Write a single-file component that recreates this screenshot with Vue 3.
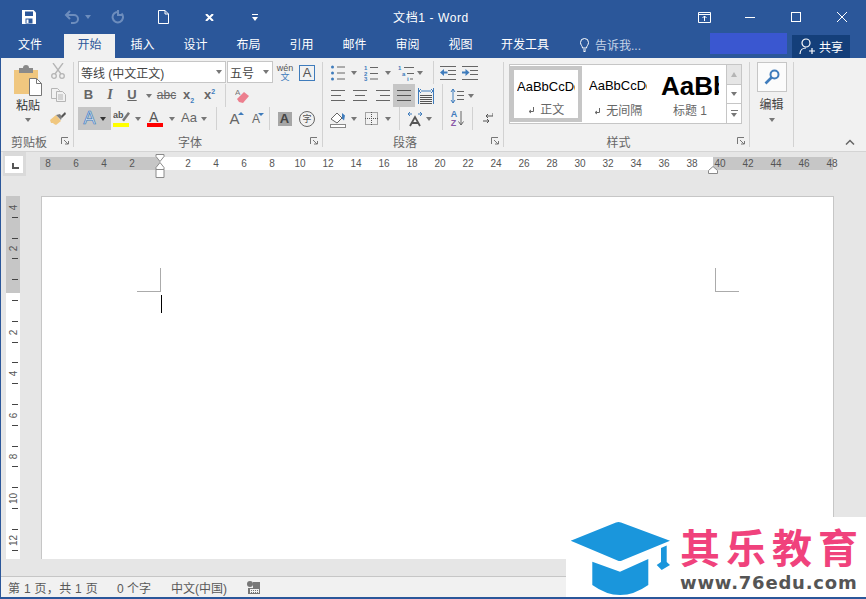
<template>
	<div class="window">
		<header class="titlebar">
			<div class="qat">
				<svg width="14" height="14" viewBox="0 0 14 14"><path d="M0 0h11.500l2.500 2.500v11.500h-14z" fill="#fff"/><path d="M3 1.500h8v4.500h-8zM3.500 8.500h7v5h-7z" fill="#2b579a"/><rect x="4.500" y="9.500" width="2" height="3.500" fill="#fff"/></svg>
				<svg width="15" height="14" viewBox="0 0 15 14" fill="none" stroke="#6d8dbd" stroke-width="2"><path d="M2 5h8a4 4 0 0 1 0 8h-3"/><path d="M6 1l-4 4 4 4"/></svg>
				<span class="caret caret--title"></span>
				<svg width="13" height="14" viewBox="0 0 13 14" fill="none" stroke="#6d8dbd" stroke-width="2"><path d="M10.500 3.500a5.200 5.200 0 1 1-3-1.500"/><path d="M7 0v5h4"/></svg>
				<svg width="11" height="14" viewBox="0 0 11 14" fill="#2b579a" stroke="#fff"><path d="M.5.5h6.500l3.500 3.500v9.500h-10zM7 .5v3.500h3.500"/></svg>
				<svg width="9" height="7" viewBox="0 0 9 7" fill="none" stroke="#fff" stroke-width="2"><path d="M1 0l7 7M8 0l-7 7"/></svg>
				<svg width="6" height="7" viewBox="0 0 6 7" fill="#fff"><rect width="6" height="1"/><path d="M0 3h6l-3 4z"/></svg>
			</div>
			<div class="doc-title">文档1 - Word</div>
			<div class="win-controls">
				<span class="win-btn"><svg width="13" height="11" viewBox="0 0 13 11" fill="none" stroke="#fff"><path d="M.5.500h12v10h-12zM.5 2.500h12M6.500 9v-5M4.500 6l2-2 2 2"/></svg></span>
				<span class="win-btn"><svg width="10" height="1" viewBox="0 0 10 1"><rect width="10" height="1" fill="#fff"/></svg></span>
				<span class="win-btn"><svg width="10" height="10" viewBox="0 0 10 10" fill="none" stroke="#fff"><rect x=".5" y=".5" width="9" height="9"/></svg></span>
				<span class="win-btn"><svg width="10" height="10" viewBox="0 0 10 10" stroke="#fff"><path d="M0 0l10 10M10 0l-10 10"/></svg></span>
			</div>
		</header>

		<nav class="tabs">
			<span class="tab tab--file">文件</span>
			<span
				v-for="tab in tabs"
				:key="tab"
				:class="['tab', { 'tab--active': tab == '开始', 'tab--wide': tab == '开发工具' }]"
			>{{ tab }}</span>
			<span class="tell">
				<svg width="9" height="14" viewBox="0 0 9 14" fill="none" stroke="#fff"><path d="M2.500 10c0-2-2-3-2-5.500a4 4 0 0 1 8 0c0 2.500-2 3.500-2 5.500zM3 12h3M3.500 13.500h2"/></svg>
				告诉我...
			</span>
			<span class="account"></span>
			<span class="share">
				<svg width="17" height="16" viewBox="0 0 17 16" fill="none" stroke="#fff" stroke-width="1.200"><circle cx="7" cy="5" r="4"/><path d="M1 16c0-4 3-6 6-6M10 13h6M13 10v6"/></svg>
				共享
			</span>
		</nav>

		<section class="ribbon">
			<div class="group group--clipboard">
				<div class="group-body clipboard">
					<div class="paste">
						<svg width="28" height="31" viewBox="0 0 28 31">
							<rect y="5" width="24" height="24" fill="#f0c77f"/>
							<path d="M5 3h4a3 3 0 0 1 6 0h4v5h-14z" fill="#8a8a8a"/>
							<path d="M15.500 13.500h7l5 5v12h-12z" fill="#fff" stroke="#777"/>
							<path d="M22.500 13.500v5h5" fill="none" stroke="#777"/>
						</svg>
						<span class="paste-label">粘贴</span>
						<span class="caret"></span>
					</div>
					<div class="clip-tools">
						<svg width="14" height="16" viewBox="0 0 14 16" fill="none" stroke="#b5b5b5" stroke-width="1.300"><path d="M2 0l8 11M12 0l-8 11"/><circle cx="3" cy="13" r="2.300"/><circle cx="11" cy="13" r="2.300"/></svg>
						<svg width="15" height="14" viewBox="0 0 15 14" fill="#f1f1f1" stroke="#b5b5b5"><path d="M.5.5h6l2 2v8h-8z"/><path d="M5.500 3.500h6l3 3v7h-9zM7 7h5M7 9h5M7 11h5"/></svg>
						<svg width="16" height="14" viewBox="0 0 16 14"><path d="M0 9l6-5 5 6-5 4-2-1-1-1-2 0z" fill="#f0c77f"/><path d="M6 4l4-1 2 3-1 3z" fill="#7d7d7d"/><path d="M11 5l4-4 1 2-4 4z" fill="#555"/></svg>
					</div>
				</div>
				<div class="group-label"><span>剪贴板</span><i class="launcher"><svg width="8" height="8" viewBox="0 0 8 8" fill="none" stroke="#777"><path d="M.5 7V.5h6.500M3 3l4 4M4 7h3.500v-3"/></svg></i></div>
			</div>
			<span class="group-sep"></span>

			<div class="group group--font">
				<div class="group-body">
					<div class="row font-row-1">
						<span class="combo combo--font">等线 (中文正文)<span class="caret"></span></span>
						<span class="combo combo--size">五号<span class="caret"></span></span>
						<span class="wen"><b>wén</b><b class="wen-zh">文</b></span>
						<span class="boxed-a">A</span>
					</div>
					<div class="row font-row-2">
						<b class="glyph">B</b>
						<i class="glyph glyph--serif">I</i>
						<b class="glyph glyph--u">U</b>
						<span class="caret"></span>
						<span class="glyph glyph--strike">abc</span>
						<b class="glyph">x<sub>2</sub></b>
						<b class="glyph">x<sup>2</sup></b>
						<span class="row-sep"></span>
						<svg width="15" height="16" viewBox="0 0 15 16"><path d="M2 11l7-7 5 4-6 7-4-1z" fill="#ec7f8e"/><text x="0" y="7" font-size="8" font-family="Liberation Sans" fill="#777">A</text></svg>
					</div>
					<div class="row font-row-3">
						<span class="text-effect"><span class="outline-a">A</span><span class="caret caret--dark"></span></span>
						<span class="marker">
							<svg width="17" height="18" viewBox="0 0 17 18"><text x="0" y="8" font-size="9" font-family="Liberation Sans" font-weight="bold" fill="#555">ab</text><path d="M9 10l6-8 2 1.500-6 8z" fill="#777"/><rect y="13" width="16" height="4" fill="#ff0"/></svg>
						</span>
						<span class="caret"></span>
						<span class="marker">
							<svg width="16" height="18" viewBox="0 0 16 18"><text x="2" y="12" font-size="14" font-family="Liberation Sans" fill="#555">A</text><rect y="13" width="16" height="4" fill="#f00"/></svg>
						</span>
						<span class="caret"></span>
						<span class="glyph glyph--aa">Aa</span>
						<span class="caret"></span>
						<span class="row-sep"></span>
						<span class="grow-a"><span>A</span><i class="tri tri--up"></i></span>
						<span class="grow-a grow-a--small"><span>A</span><i class="tri tri--down"></i></span>
						<span class="row-sep"></span>
						<span class="shade-a">A</span>
						<span class="circle-zi">字</span>
					</div>
				</div>
				<div class="group-label"><span>字体</span><i class="launcher"><svg width="8" height="8" viewBox="0 0 8 8" fill="none" stroke="#777"><path d="M.5 7V.5h6.500M3 3l4 4M4 7h3.500v-3"/></svg></i></div>
			</div>
			<span class="group-sep"></span>

			<div class="group group--para">
				<div class="group-body">
					<div class="row para-row-1">
						<svg width="14" height="16" viewBox="0 0 14 16"><g fill="#3f7cbc"><circle cx="1.500" cy="2" r="1.500"/><circle cx="1.500" cy="8" r="1.500"/><circle cx="1.500" cy="14" r="1.500"/></g><path d="M6 2h8M6 8h8M6 14h8" stroke="#666"/></svg>
						<span class="caret"></span>
						<svg width="14" height="16" viewBox="0 0 14 16"><g font-size="6" font-weight="bold" font-family="Liberation Sans" fill="#3f7cbc"><text y="5">1</text><text y="11">2</text><text y="16">3</text></g><path d="M6 2.500h8M6 8.500h8M6 14h8" stroke="#666"/></svg>
						<span class="caret"></span>
						<svg width="16" height="16" viewBox="0 0 16 16"><g font-size="6" font-weight="bold" font-family="Liberation Sans" fill="#3f7cbc"><text y="5">1</text><text x="4" y="11">a</text><text x="9" y="16">i</text></g><path d="M6 2.500h10M9 8.500h7M12 14h3" stroke="#666"/></svg>
						<span class="caret"></span>
						<span class="row-sep"></span>
						<svg width="16" height="14" viewBox="0 0 16 14"><path d="M0 .5h16M8 4.500h8M8 8.500h8M0 13.500h16" stroke="#666"/><path d="M0 6.500l4-3.500v2.500h3.500v2h-3.500v2.500z" fill="#3f7cbc"/></svg>
						<svg width="16" height="14" viewBox="0 0 16 14"><path d="M0 .5h16M8 4.500h8M8 8.500h8M0 13.500h16" stroke="#666"/><path d="M7.500 6.500l-4-3.500v2.500h-3.500v2h3.500v2.500z" fill="#3f7cbc"/></svg>
					</div>
					<div class="row para-row-2">
						<svg width="14" height="11" viewBox="0 0 14 11" stroke="#666"><path d="M0 .5h14M0 5.500h10M0 10.500h14"/></svg>
						<svg width="14" height="11" viewBox="0 0 14 11" stroke="#666"><path d="M0 .5h14M2 5.500h10M0 10.500h14"/></svg>
						<svg width="14" height="11" viewBox="0 0 14 11" stroke="#666"><path d="M0 .5h14M4 5.500h10M0 10.500h14"/></svg>
						<span class="justify-on"><svg width="14" height="11" viewBox="0 0 14 11" stroke="#555"><path d="M0 .5h14M0 5.500h14M0 10.500h14"/></svg></span>
						<svg width="16" height="16" viewBox="0 0 16 16"><path d="M.5 0v16M15.500 0v16" stroke="#3f7cbc"/><path d="M3 3h10M3 1l-2 2 2 2M13 1l2 2-2 2" fill="none" stroke="#3f7cbc"/><path d="M2 7.500h12M2 9.500h12M2 11.500h12M2 13.500h12M2 15.500h12" stroke="#555"/></svg>
						<span class="row-sep"></span>
						<svg width="14" height="16" viewBox="0 0 14 16"><path d="M3 1v14M1 4l2-3 2 3M1 12l2 3 2-3" fill="none" stroke="#3f7cbc"/><path d="M7 3.500h7M7 7.500h7M7 11.500h7" stroke="#666"/></svg>
						<span class="caret"></span>
					</div>
					<div class="row para-row-3">
						<svg width="17" height="18" viewBox="0 0 17 18"><path d="M1 9l6-6 5 5-5 5z" fill="#fff" stroke="#666"/><path d="M12 3l3 2.500-1 5-2-2z" fill="#3f7cbc"/><rect x=".5" y="14.500" width="15" height="3" fill="#fff" stroke="#888"/></svg>
						<span class="caret"></span>
						<svg width="13" height="13" viewBox="0 0 13 13" fill="none" stroke="#555" stroke-dasharray="1 1"><rect x=".5" y=".5" width="12" height="12"/><path d="M6.500 0v13M0 6.500h13"/></svg>
						<span class="caret"></span>
						<span class="row-sep"></span>
						<svg width="16" height="16" viewBox="0 0 16 16"><path d="M3 15l5-9 5 9M5 12h6" fill="none" stroke="#555" stroke-width="1.800"/><path d="M5 3h-4M3 1l-2 2 2 2M11 3h4M13 1l2 2-2 2" fill="none" stroke="#3f7cbc"/></svg>
						<span class="caret"></span>
						<span class="row-sep"></span>
						<span class="sort"><span class="sort-az"><b>A</b><b>Z</b></span><svg width="6" height="15" viewBox="0 0 6 15" fill="none" stroke="#666"><path d="M3 0v14M.5 10.500l2.500 3.500 2.500-3.500"/></svg></span>
						<span class="row-sep"></span>
						<svg width="10" height="13" viewBox="0 0 10 13" fill="none" stroke="#555"><path d="M10 1v3h-7M5 2l-2 2 2 2M0 9h6M4 7l2 2-2 2"/></svg>
					</div>
				</div>
				<div class="group-label"><span>段落</span><i class="launcher"><svg width="8" height="8" viewBox="0 0 8 8" fill="none" stroke="#777"><path d="M.5 7V.5h6.500M3 3l4 4M4 7h3.500v-3"/></svg></i></div>
			</div>
			<span class="group-sep"></span>

			<div class="group group--styles">
				<div class="group-body gallery-wrap">
					<div class="gallery">
						<div
							v-for="item in styleItems"
							:key="item.name"
							:class="['style-item', item.cls]"
						>
							<span class="style-preview">{{ item.preview }}</span>
							<span class="style-name">
								<svg v-if="item.mark" class="para-mark" width="6" height="7" viewBox="0 0 6 7" fill="none" stroke="#666"><path d="M5.500 0v4.500h-4M3 3l-2 1.500 2 1.500"/></svg>
								{{ item.name }}
							</span>
						</div>
					</div>
					<div class="gallery-scroll">
						<span class="scroll-btn scroll-btn--off"><i class="caret caret--up"></i></span>
						<span class="scroll-btn"><i class="caret"></i></span>
						<span class="scroll-btn scroll-btn--more"><i class="more-line"></i><i class="caret"></i></span>
					</div>
				</div>
				<div class="group-label"><span>样式</span><i class="launcher"><svg width="8" height="8" viewBox="0 0 8 8" fill="none" stroke="#777"><path d="M.5 7V.5h6.500M3 3l4 4M4 7h3.500v-3"/></svg></i></div>
			</div>
			<span class="group-sep"></span>

			<div class="group group--edit">
				<span class="edit-btn">
					<svg width="16" height="16" viewBox="0 0 16 16" fill="none" stroke="#3f7cbc"><circle cx="10.500" cy="5.500" r="4" stroke-width="2"/><path d="M7.500 8.500l-6 6" stroke-width="2.600"/></svg>
				</span>
				<span class="edit-label">编辑</span>
				<span class="caret"></span>
			</div>
			<span class="group-sep"></span>

			<span class="collapse">
				<svg width="10" height="6" viewBox="0 0 10 6" fill="none" stroke="#666" stroke-width="1.500"><path d="M1 5.500l4-4 4 4"/></svg>
			</span>
		</section>

		<div class="ruler-row">
			<span class="tab-stop"><span class="tab-stop-inner"><i class="tab-mark"></i></span></span>
			<div class="h-ruler">
				<span class="h-ruler-off h-ruler-off--left"></span>
				<span class="h-ruler-on"></span>
				<span class="h-ruler-off"></span>
				<div class="h-ruler-nums">
					<span v-for="(num, i) in hRuler" :key="i">{{ num }}</span>
				</div>
				<svg class="indent-left" width="10" height="25" viewBox="0 0 10 25" fill="#fff" stroke="#8a8a8a"><path d="M1 .5h8v2l-4 5-4-5zM1 15.500v-2l4-5 4 5v2zM1 15.500h8v8h-8z"/></svg>
				<svg class="indent-right" width="10" height="8" viewBox="0 0 10 8" fill="#fff" stroke="#8a8a8a"><path d="M.5 7.500v-3l4.500-4 4.500 4v3z"/></svg>
			</div>
		</div>

		<main class="workspace">
			<div class="v-ruler">
				<span class="v-ruler-off"></span>
				<div class="v-ruler-cells">
					<div v-for="(cell, i) in vRuler" :key="i" class="v-cell">
						<span class="v-num">{{ cell }}</span>
					</div>
				</div>
			</div>
			<div class="page">
				<div class="crop-row">
					<span class="crop crop--left"></span>
					<span class="crop crop--right"></span>
				</div>
				<span class="text-cursor"></span>
			</div>
		</main>

		<footer class="statusbar">
			<span class="status-page">第 1 页，共 1 页</span>
			<span class="status-words">0 个字</span>
			<span class="status-lang">中文(中国)</span>
			<svg width="13" height="13" viewBox="0 0 13 13"><circle cx="3" cy="3" r="3" fill="#777"/><path d="M6 1h7v12h-12v-6h5z" fill="#777"/><path d="M3 8h9v4h-9z" fill="#f1f1f1"/><path d="M4 9h1v1h-1zM6 9h1v1h-1zM8 9h1v1h-1zM10 9h1v1h-1zM4 11h1v1h-1zM6 11h1v1h-1zM8 11h1v1h-1zM10 11h1v1h-1z" fill="#777"/></svg>
		</footer>

		<div class="watermark">
			<svg class="wm-cap" width="110" height="82" viewBox="0 0 110 82">
				<path d="M4.700 23.700L50 5.500q2.500-1 5 0L104 23.700 56 43.500q-2 1-4.500 0z" fill="#1a96dc"/>
				<path d="M26.300 44.700L54 54.700 82.300 42V68Q54 88 26.300 68z" fill="#1a96dc"/>
				<path d="M95 31l5.700-2.500V45l3.300 3-8.300 5-5-5L95 45z" fill="#1a96dc"/>
			</svg>
			<div class="wm-text">
				<div class="wm-name">其乐教育</div>
				<div class="wm-url">www.76edu.com</div>
			</div>
		</div>
	</div>
</template>
<script setup>
    const tabs = ['开始', '插入', '设计', '布局', '引用', '邮件', '审阅', '视图', '开发工具'];

    const styleItems = [
        { name: '正文', preview: 'AaBbCcDd', cls: 'style-item--active', mark: true },
        { name: '无间隔', preview: 'AaBbCcDd', cls: '', mark: true },
        { name: '标题 1', preview: 'AaBb', cls: 'style-item--heading', mark: false },
    ];

    const hRuler = [8, 6, 4, 2, '', 2, 4, 6, 8, 10, 12, 14, 16, 18, 20, 22, 24, 26, 28, 30, 32, 34, 36, 38, 40, 42, 44, 46, 48];

    // 每格一个刻度，数字隔一格显示
    const vRuler = ['4', '', '2', '', '', '', '2', '', '4', '', '6', '', '8', '', '10', '', '12'];
</script>
<style scoped>
    .window{
        width: 866px;
        height: 599px;
        position: relative;
        overflow: hidden;
        display: flex;
        flex-direction: column;
        box-sizing: border-box;
        border-left: 1px solid #2b579a;
        border-bottom: 2px solid #2b579a;
        background-color: #e6e6e6;
        font-family: "Liberation Sans", "Noto Sans CJK SC", sans-serif;
        font-size: 12px;
        color: #444;
    }
    i{
        font-style: normal;
    }

    .titlebar{
        height: 34px;
        flex: none;
        display: flex;
        align-items: center;
        background-color: #2b579a;
        color: #fff;
    }
    .qat{
        display: grid;
        grid-template-columns: 55px 30px 4px 54px 38px 54px 38px;
        width: 273px;
        justify-items: center;
        align-items: center;
    }
    .doc-title{
        width: 314px;
        margin-top: -2px;
        text-align: center;
        font-size: 12px;
        letter-spacing: .6px;
    }
    .win-controls{
        margin-left: auto;
        margin-right: 1px;
        display: flex;
    }
    .win-btn{
        width: 46px;
        height: 32px;
        display: flex;
        align-items: center;
        justify-content: center;
    }

    .tabs{
        height: 24px;
        flex: none;
        display: flex;
        align-items: center;
        background-color: #2b579a;
        color: #fff;
    }
    .tab{
        width: 53px;
        height: 24px;
        line-height: 22px;
        text-align: center;
        flex: none;
        box-sizing: border-box;
    }
    .tab--file{
        width: 58px;
        margin-right: 4px;
    }
    .tab--wide{
        width: 76px;
    }
    .tab--active{
        width: 51px;
        margin: 0 1px;
        background-color: #f1f1f1;
        color: #2b579a;
    }
    .tell{
        margin: -3px 0 0 17px;
        display: flex;
        align-items: center;
        gap: 6px;
        color: #c6d3e6;
    }
    .account{
        margin-left: auto;
        width: 77px;
        height: 21px;
        margin-top: -5px;
        background-color: #3a57d0;
    }
    .share{
        width: 58px;
        height: 23px;
        margin: 0 16px 0 5px;
        display: flex;
        align-items: center;
        justify-content: center;
        gap: 3px;
        background-color: #143f7a;
        font-size: 12px;
    }

    .ribbon{
        height: 94px;
        flex: none;
        box-sizing: border-box;
        display: flex;
        background-color: #f1f1f1;
        border-bottom: 1px solid #d4d4d4;
    }
    .group{
        display: flex;
        flex-direction: column;
        height: 93px;
        flex: none;
    }
    .group-sep{
        width: 1px;
        height: 85px;
        margin-top: 4px;
        flex: none;
        background-color: #d2d2d2;
    }
    .group--clipboard{
        width: 72px;
    }
    .group--font{
        width: 248px;
    }
    .group--para{
        width: 180px;
    }
    .group--styles{
        width: 245px;
    }
    .group--edit{
        width: 43px;
        align-items: center;
        padding-top: 4px;
        box-sizing: border-box;
    }
    .group-body{
        height: 72px;
        padding-top: 3px;
        box-sizing: border-box;
        flex: none;
    }
    .group-label{
        flex: 1;
        display: flex;
        align-items: center;
        color: #666;
        padding-top: 1px;
    }
    .group-label span{
        flex: 1;
        text-align: center;
    }
    .launcher{
        width: 16px;
        display: flex;
        justify-content: center;
    }

    .caret{
        display: inline-block;
        width: 0;
        height: 0;
        border-left: 3.5px solid transparent;
        border-right: 3.5px solid transparent;
        border-top: 4px solid #777;
    }
    .caret--dark{
        border-top-color: #333;
    }
    .caret--title{
        border-top-color: #6d8dbd;
        border-left-width: 3px;
        border-right-width: 3px;
    }
    .caret--up{
        border-top: none;
        border-bottom: 5px solid #b5b5b5;
    }

    .clipboard{
        display: flex;
    }
    .paste{
        width: 47px;
        padding-left: 7px;
        box-sizing: border-box;
        display: flex;
        flex-direction: column;
        align-items: center;
    }
    .paste svg{
        margin-top: 4px;
    }
    .paste-label{
        margin-top: 2px;
        line-height: 17px;
        color: #333;
    }
    .paste .caret{
        margin-top: 3px;
    }
    .clip-tools{
        width: 20px;
        display: flex;
        flex-direction: column;
        align-items: center;
        padding-top: 2px;
        gap: 9px;
    }

    .row{
        display: grid;
        height: 23px;
        justify-items: center;
        align-items: center;
    }
    .group--font .row{
        margin-left: 4px;
    }
    .group--para .row{
        margin-left: 5px;
    }
    .font-row-1{
        grid-template-columns: 149px 46px 24px 20px;
        justify-items: start;
        align-items: start;
    }
    .font-row-2{
        grid-template-columns: 21px 22px 22px 12px 23px 21px 21px 11px 22px;
    }
    .font-row-3{
        grid-template-columns: 33px 21px 12px 22px 12px 22px 8px 17px 19px 24px 2px 29px 16px;
    }
    .para-row-1{
        grid-template-columns: 20px 12px 22px 12px 24px 4px 22px 8px 36px;
    }
    .para-row-2{
        grid-template-columns: 20px 24px 21px 22px 22px 10px 20px 8px;
    }
    .para-row-3{
        grid-template-columns: 21px 10px 25px 8px 14px 18px 10px 16px 15px 14px 18px;
    }
    .row-sep{
        width: 1px;
        height: 23px;
        background-color: #d2d2d2;
    }
    .combo{
        height: 22px;
        box-sizing: border-box;
        border: 1px solid #c6c6c6;
        background-color: #fff;
        display: flex;
        align-items: center;
        justify-content: space-between;
        padding: 0 3px 0 2px;
        color: #444;
    }
    .combo--font{
        width: 148px;
    }
    .combo--size{
        width: 46px;
    }
    .wen{
        display: flex;
        flex-direction: column;
        align-items: center;
        justify-self: center;
        align-self: center;
        line-height: 8px;
    }
    .wen b{
        font-weight: normal;
        font-size: 9px;
        color: #555;
    }
    .wen .wen-zh{
        color: #3f7cbc;
        margin-top: 1px;
    }
    .boxed-a{
        width: 16px;
        height: 16px;
        box-sizing: border-box;
        border: 1px solid #3f7cbc;
        justify-self: center;
        align-self: center;
        text-align: center;
        line-height: 14px;
        font-size: 13px;
        color: #555;
    }
    .glyph{
        font-size: 13px;
        font-weight: bold;
        color: #666;
        line-height: 16px;
        margin-top: -1px;
    }
    .glyph sub, .glyph sup{
        font-size: 7px;
        color: #3f7cbc;
        line-height: 0;
    }
    .glyph--serif{
        font-family: "Liberation Serif", serif;
        font-style: italic;
        font-size: 14px;
    }
    .glyph--u{
        text-decoration: underline;
    }
    .glyph--strike{
        font-weight: normal;
        font-size: 12px;
        text-decoration: line-through;
    }
    .glyph--aa{
        font-weight: normal;
        font-size: 13px;
    }
    .text-effect{
        width: 33px;
        height: 23px;
        background-color: #c6c6c6;
        display: flex;
        align-items: center;
        justify-content: center;
        gap: 4px;
    }
    .outline-a{
        font-size: 18px;
        color: #dce8f5;
        -webkit-text-stroke: .7px #3f7cbc;
    }
    .marker{
        display: flex;
    }
    .grow-a{
        position: relative;
        font-size: 15px;
        color: #666;
    }
    .grow-a--small{
        font-size: 12px;
    }
    .tri{
        position: absolute;
        left: 100%;
        top: 2px;
        width: 0;
        height: 0;
        margin-left: -2px;
        border-left: 3px solid transparent;
        border-right: 3px solid transparent;
    }
    .tri--up{
        border-bottom: 3px solid #3f7cbc;
    }
    .tri--down{
        top: 1px;
        border-top: 3px solid #3f7cbc;
    }
    .shade-a{
        width: 14px;
        height: 14px;
        background-color: #a6a6a6;
        text-align: center;
        line-height: 14px;
        font-size: 13px;
        font-weight: bold;
        color: #444;
    }
    .circle-zi{
        width: 16px;
        height: 16px;
        box-sizing: border-box;
        border: 1px solid #666;
        border-radius: 50%;
        text-align: center;
        line-height: 14px;
        font-size: 9px;
        color: #555;
    }
    .justify-on{
        width: 22px;
        height: 23px;
        background-color: #c6c6c6;
        display: flex;
        align-items: center;
        justify-content: center;
    }
    .sort{
        display: flex;
        align-items: center;
        gap: 1px;
    }
    .sort-az{
        display: flex;
        flex-direction: column;
        line-height: 9px;
        font-size: 9px;
    }
    .sort-az b:first-child{
        color: #3f7cbc;
    }
    .sort-az b:last-child{
        color: #8a5aa8;
    }

    .gallery-wrap{
        display: flex;
        padding-left: 5px;
        padding-top: 6px;
    }
    .gallery{
        width: 218px;
        height: 60px;
        box-sizing: border-box;
        border: 1px solid #c6c6c6;
        background-color: #fff;
        display: flex;
        overflow: hidden;
    }
    .style-item{
        width: 72px;
        padding: 8px 7px 0;
        box-sizing: border-box;
        display: flex;
        flex-direction: column;
        align-items: center;
        flex: none;
    }
    .style-item--active{
        margin: 1px 0 0;
        height: 56px;
        padding: 4px 3px 0;
        border: 4px solid #c6c6c6;
    }
    .style-preview{
        width: 58px;
        height: 26px;
        line-height: 26px;
        overflow: hidden;
        white-space: nowrap;
        font-size: 13px;
        color: #000;
    }
    .style-item--heading .style-preview{
        font-size: 26px;
        font-weight: bold;
    }
    .style-name{
        margin-top: 4px;
        color: #666;
        line-height: 16px;
        white-space: nowrap;
    }
    .para-mark{
        margin-right: 3px;
    }
    .gallery-scroll{
        width: 15px;
        height: 60px;
        box-sizing: border-box;
        border: 1px solid #c6c6c6;
        border-left: none;
        display: flex;
        flex-direction: column;
        background-color: #fff;
    }
    .scroll-btn{
        flex: 1;
        display: flex;
        flex-direction: column;
        gap: 2px;
        align-items: center;
        justify-content: center;
        border-top: 1px solid #c6c6c6;
    }
    .scroll-btn--off{
        background-color: #e6e6e6;
        border-top: none;
    }
    .more-line{
        width: 7px;
        height: 1px;
        background-color: #777;
    }
    .edit-btn{
        width: 30px;
        height: 30px;
        box-sizing: border-box;
        border: 1px solid #c6c6c6;
        background-color: #fbfbfb;
        display: flex;
        align-items: center;
        justify-content: center;
    }
    .edit-label{
        margin-top: 5px;
        line-height: 16px;
        color: #444;
    }
    .group--edit .caret{
        margin-top: 5px;
    }
    .collapse{
        flex: 1;
        display: flex;
        justify-content: flex-end;
        align-items: flex-end;
        padding: 0 11px 6px 0;
    }

    .ruler-row{
        height: 44px;
        flex: none;
        display: flex;
        align-items: flex-start;
    }
    .tab-stop{
        width: 23px;
        height: 24px;
        margin-left: 2px;
        padding: 4px 3px 3px 2px;
        box-sizing: border-box;
        background-color: #dadada;
        flex: none;
    }
    .tab-stop-inner{
        display: block;
        width: 18px;
        height: 17px;
        position: relative;
        background-color: #fff;
    }
    .tab-mark{
        position: absolute;
        left: 7px;
        top: 7px;
        width: 5px;
        height: 4px;
        border-left: 2px solid #555;
        border-bottom: 2px solid #555;
    }
    .h-ruler{
        position: relative;
        margin: 5px 0 0 14px;
        width: 793px;
        height: 13px;
        display: flex;
    }
    .h-ruler-off{
        flex: 1;
        background-color: #c6c6c6;
    }
    .h-ruler-off--left{
        flex: none;
        width: 120px;
    }
    .h-ruler-on{
        width: 553px;
        background-color: #fff;
    }
    .h-ruler-nums{
        position: absolute;
        left: -6px;
        top: 0;
        display: flex;
        font-size: 10px;
        line-height: 14px;
        color: #555;
    }
    .h-ruler-nums span{
        width: 28px;
        text-align: center;
    }
    .indent-left{
        position: absolute;
        left: 115px;
        top: -3px;
    }
    .indent-right{
        position: absolute;
        left: 668px;
        top: 9px;
    }

    .workspace{
        height: 363px;
        flex: none;
        display: flex;
        overflow: hidden;
    }
    .v-ruler{
        position: relative;
        width: 14px;
        margin: -1px 0 0 5px;
        height: 364px;
        background-color: #fff;
    }
    .v-ruler-off{
        display: block;
        height: 98px;
        background-color: #c6c6c6;
    }
    .v-ruler-cells{
        position: absolute;
        left: 0;
        top: 2px;
        width: 14px;
    }
    .v-cell{
        height: 20.8px;
        box-sizing: border-box;
        position: relative;
        display: flex;
        align-items: center;
        justify-content: center;
    }
    .v-cell::after{
        content: '';
        position: absolute;
        left: 6px;
        bottom: 0;
        width: 6px;
        height: 1px;
        background-color: #444;
    }
    .v-num{
        transform: rotate(-90deg);
        font-size: 10px;
        color: #555;
        margin-left: 1px;
    }
    .page{
        width: 793px;
        margin-left: 21px;
        padding: 71px 94px 0 95px;
        box-sizing: border-box;
        background-color: #fff;
        border: 1px solid #c6c6c6;
        border-bottom: none;
    }
    .crop-row{
        display: flex;
        justify-content: space-between;
    }
    .crop{
        width: 24px;
        height: 24px;
        box-sizing: border-box;
        border-bottom: 1px solid #ababab;
    }
    .crop--left{
        border-right: 1px solid #ababab;
    }
    .crop--right{
        width: 24px;
        border-left: 1px solid #ababab;
    }
    .text-cursor{
        display: block;
        width: 1px;
        height: 18px;
        margin: 3px 0 0 24px;
        background-color: #000;
    }

    .statusbar{
        height: 21px;
        margin-top: auto;
        flex: none;
        box-sizing: border-box;
        display: flex;
        align-items: center;
        padding-left: 7px;
        background-color: #f1f1f1;
        border-top: 1px solid #c6c6c6;
        color: #595959;
    }
    .status-page{
        width: 109px;
        letter-spacing: .3px;
    }
    .status-words{
        width: 54px;
    }
    .status-lang{
        width: 76px;
    }

    .watermark{
        position: absolute;
        right: 0;
        bottom: -2px;
        width: 300px;
        height: 82px;
        display: flex;
        background-color: #fff;
    }
    .wm-cap{
        flex: none;
    }
    .wm-text{
        margin-left: 4px;
        padding-top: 4px;
    }
    .wm-name{
        font-family: "Noto Sans CJK SC", sans-serif;
        font-weight: bold;
        font-size: 40px;
        line-height: 50px;
        letter-spacing: 6px;
        color: #f0427c;
        white-space: nowrap;
    }
    .wm-url{
        margin-top: 1px;
        font-family: "DejaVu Sans", sans-serif;
        font-weight: bold;
        font-size: 18px;
        line-height: 22px;
        letter-spacing: .8px;
        color: #555;
        white-space: nowrap;
    }
</style>
<style>
    html, body{
        margin: 0;
        overflow: hidden;
    }
</style>
